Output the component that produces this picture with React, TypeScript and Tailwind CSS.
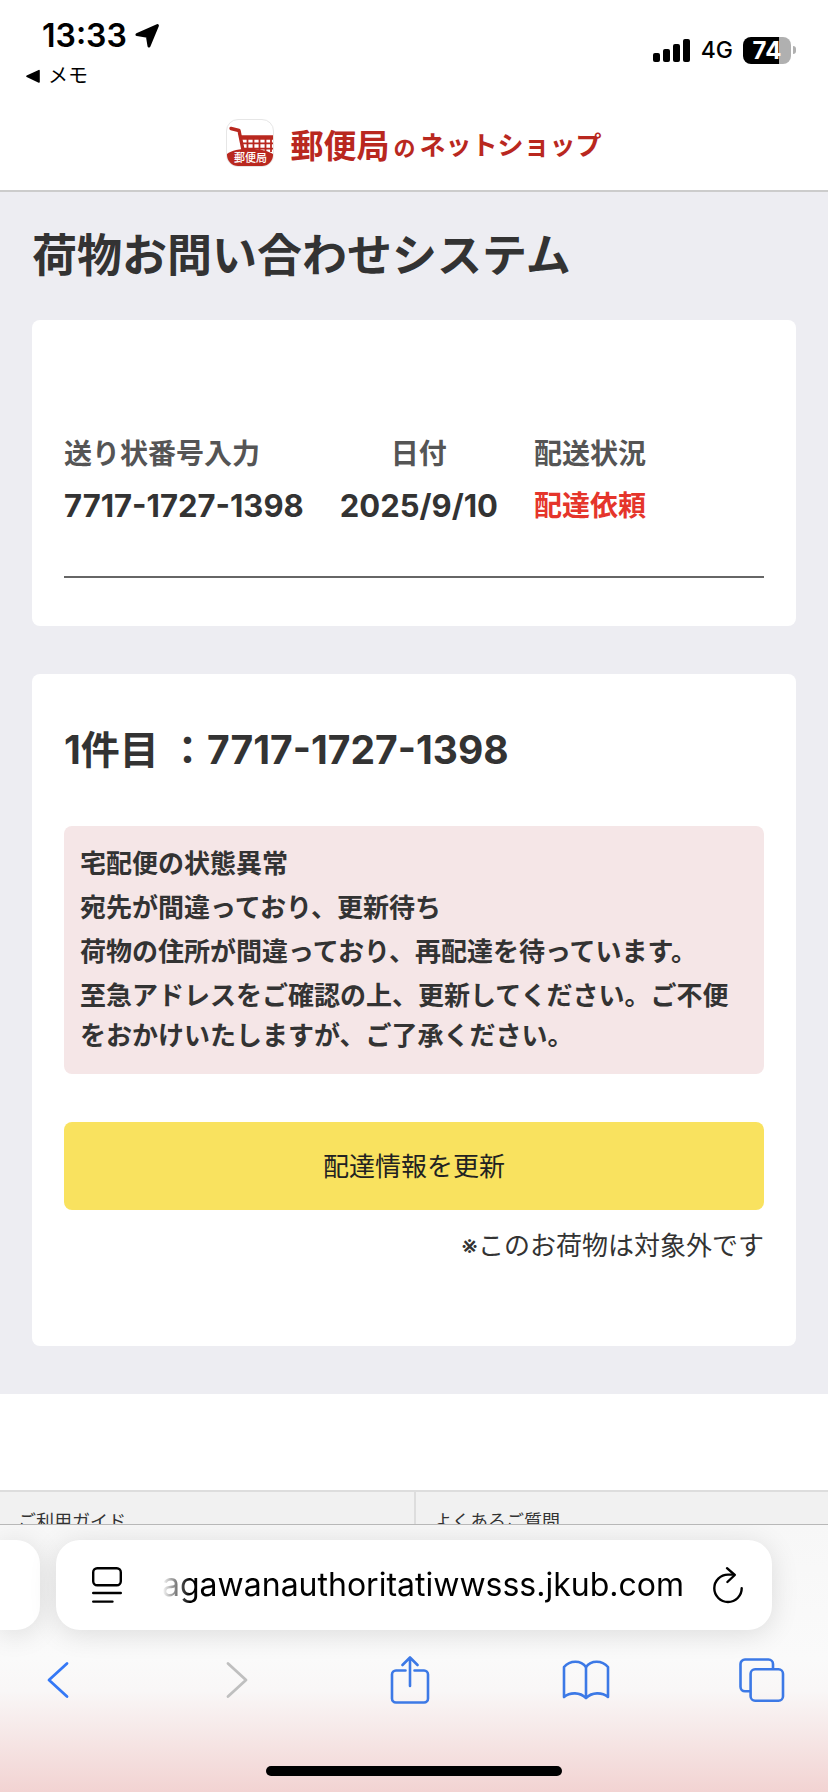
import React from "react";

const ALERT_LINES = [
  "宅配便の状態異常",
  "宛先が間違っており、更新待ち",
  "荷物の住所が間違っており、再配達を待っています。",
  "至急アドレスをご確認の上、更新してください。ご不便をおかけいたしますが、ご了承ください。",
];

const FOOTER_LINKS = ["ご利用ガイド", "よくあるご質問"];

function StatusBar() {
  return (
    <div className="flex h-24 items-start justify-between pl-6 pr-8 text-black">
      <div className="flex flex-col pt-4">
        <div className="flex h-10 items-center gap-2 pl-[18px]">
          <span className="text-[32px] leading-10 font-semibold">13:33</span>
          <svg className="h-6 w-6" viewBox="0 0 24 24" aria-hidden="true">
            <path
              d="M22.4 1.6 L14 22 L12.4 12.2 L2 10.6 Z"
              fill="black"
              stroke="black"
              strokeWidth="3"
              strokeLinejoin="round"
            />
          </svg>
        </div>
        <a href="#memo" className="flex h-10 items-center gap-2 text-[20px] leading-10">
          <svg className="h-4 w-4" viewBox="0 0 16 16" aria-hidden="true">
            <path d="M3 8.3 L15 2.6 V14 Z" fill="black" stroke="black" strokeWidth="1.6" strokeLinejoin="round" />
          </svg>
          メモ
        </a>
      </div>

      <div className="flex h-[100px] items-center gap-2.5">
        <svg className="h-6 w-[38px]" viewBox="0 0 38 24" aria-hidden="true">
          <rect x="0" y="15" width="7" height="9" rx="2" />
          <rect x="10" y="11" width="7" height="13" rx="2" />
          <rect x="20" y="6" width="7" height="18" rx="2" />
          <rect x="30" y="1" width="7" height="23" rx="2" />
        </svg>
        <span className="text-[23px] leading-7 font-medium">4G</span>
        <div className="flex items-center gap-0.5">
          <div className="flex h-[27px] w-12 items-center justify-center rounded-lg bg-[linear-gradient(to_right,black_75%,#b0b0b0_75%)] text-[24px] leading-[27px] font-bold text-white">
            74
          </div>
          <div className="h-2 w-[3px] rounded-r-full bg-[#b0b0b0]" />
        </div>
      </div>
    </div>
  );
}

function ShopHeader() {
  return (
    <header className="flex h-24 shrink-0 items-center justify-center border-b-2 border-[#cccccc]">
      <a href="#top" className="flex items-center gap-4 text-[#b9281f]">
        <div className="relative h-12 w-12 overflow-hidden rounded-xl border border-[#e6e6e6] bg-white">
          <svg className="h-full w-full" viewBox="0 0 46 46" aria-hidden="true">
            <g fill="none" stroke="#b9281f">
              <path d="M4 8.5 L12 10.5 L16 30" strokeWidth="3.4" strokeLinecap="round" strokeLinejoin="round" />
              <path d="M14 17.5 H46" strokeWidth="4.4" />
              <path d="M15 23.4 H46 M16 28.6 H46" strokeWidth="1.8" />
              <path d="M20.5 17 V32 M26.5 17 V32 M32.5 17 V32 M38.5 17 V32 M44 17 V32" strokeWidth="1.8" />
            </g>
            <path d="M0 34 C8 27 36 27 46 34 V46 H0 Z" fill="#b9281f" />
          </svg>
          <span className="absolute inset-x-0 bottom-0.5 text-center text-[11px] leading-3 font-medium text-white">
            郵便局
          </span>
        </div>
        <span className="flex items-center pt-1.5 leading-10 font-bold">
          <span className="text-[33px]">郵便局</span>
          <span className="px-1 pt-1 text-[22px]">の</span>
          <span className="text-[26px]">ネットショップ</span>
        </span>
      </a>
    </header>
  );
}

function SummaryCard() {
  return (
    <section className="rounded-lg bg-white px-8 pt-[108px] pb-12">
      <div className="border-b-2 border-[#666666] pb-11">
        <table className="text-[28px] leading-[52px] font-bold whitespace-nowrap">
          <thead className="text-[#555555]">
            <tr>
              <th scope="col" className="pr-9 text-left">送り状番号入力</th>
              <th scope="col" className="pr-9 text-center">日付</th>
              <th scope="col" className="text-left">配送状況</th>
            </tr>
          </thead>
          <tbody>
            <tr>
              <td className="pr-9 text-[31px]">7717-1727-1398</td>
              <td className="pr-9 text-[31px]">2025/9/10</td>
              <td className="text-[#e5352b]">配達依頼</td>
            </tr>
          </tbody>
        </table>
      </div>
    </section>
  );
}

function DetailCard() {
  return (
    <section className="mt-12 rounded-lg bg-white px-8 pt-12 pb-20">
      <h2 className="text-[39px] leading-14 font-bold">1件目 ：7717-1727-1398</h2>

      <div className="mt-12 rounded-lg bg-[#f5e6e7] p-4 text-[26px] leading-10 font-bold">
        {ALERT_LINES.map((line) => (
          <p key={line} className="py-0.5">{line}</p>
        ))}
      </div>

      <button type="button" className="mt-12 h-22 w-full rounded-lg bg-[#f9e25f] text-[26px] text-[#222222]">
        配達情報を更新
      </button>
      <p className="mt-4 text-right text-[26px] leading-10">※このお荷物は対象外です</p>
    </section>
  );
}

function BrowserBar() {
  return (
    <div className="shrink-0 overflow-hidden border-t border-[#b8b8b8] bg-[linear-gradient(to_bottom,#f7f7f7_0%,#fafafa_50%,#f9f7f7_62%,#f2d3d2_100%)] pt-[15px] pb-4">
      <div className="flex h-[90px] gap-4 pr-14">
        <div className="w-10 shrink-0 rounded-r-3xl bg-white shadow-[0_4px_28px_rgba(0,0,0,0.12)]" />
        <div className="flex min-w-0 flex-1 items-center rounded-3xl bg-white pr-7 pl-9 shadow-[0_4px_28px_rgba(0,0,0,0.12)]">
          <button type="button" aria-label="ページメニュー">
            <svg className="h-9 w-[30px]" viewBox="0 0 30 36" fill="none" stroke="black" strokeWidth="2.4" strokeLinecap="round">
              <rect x="1.2" y="1.2" width="27.6" height="17" rx="4" />
              <path d="M1.2 26 H28.8 M1.2 34.6 H20.5" />
            </svg>
          </button>
          <input
            type="text"
            readOnly
            aria-label="アドレス"
            value="agawanauthoritatiwwsss.jkub.com"
            className="ml-10 min-w-0 flex-1 bg-transparent text-right text-[32px] leading-10 text-black outline-none [mask-image:linear-gradient(to_right,transparent,black_28px)]"
          />
          <button type="button" aria-label="再読み込み" className="ml-7">
            <svg className="h-[38px] w-8" viewBox="0 0 32 38" fill="none" stroke="black" strokeWidth="2.4" strokeLinecap="round" strokeLinejoin="round">
              <path d="M21 8.6 H16 A13.7 13.7 0 1 0 29.7 22.3" />
              <path d="M15 2.2 L22.8 9 L15.4 16" />
            </svg>
          </button>
        </div>
      </div>

      <nav className="mt-[26px] flex h-12 items-center justify-between pr-[42px] pl-[34px]">
        <button type="button" aria-label="戻る" className="flex w-12 justify-center">
          <svg className="h-10 w-9" viewBox="0 0 36 40" fill="none" stroke="#3478f6" strokeWidth="2.8" strokeLinecap="round" strokeLinejoin="round">
            <path d="M27 3.5 L9 20 L27 36.5" />
          </svg>
        </button>
        <button type="button" aria-label="進む" className="flex w-12 justify-center">
          <svg className="h-10 w-9" viewBox="0 0 36 40" fill="none" stroke="#bfbfbf" strokeWidth="2.8" strokeLinecap="round" strokeLinejoin="round">
            <path d="M12 3.5 L30 20 L12 36.5" />
          </svg>
        </button>
        <button type="button" aria-label="共有" className="flex w-12 justify-center">
          <svg className="h-12 w-10" viewBox="0 0 40 48" fill="none" stroke="#3c79e6" strokeWidth="2.6" strokeLinecap="round" strokeLinejoin="round">
            <path d="M15.5 14.5 H6 A4 4 0 0 0 2 18.5 V42.5 A4 4 0 0 0 6 46.5 H34 A4 4 0 0 0 38 42.5 V18.5 A4 4 0 0 0 34 14.5 H24.5" />
            <path d="M20 30 V1.5 M12.5 9 L20 1.5 L27.5 9" />
          </svg>
        </button>
        <button type="button" aria-label="ブックマーク" className="flex w-12 justify-center">
          <svg className="h-10 w-12" viewBox="0 0 48 40" fill="none" stroke="#3c79e6" strokeWidth="2.6" strokeLinejoin="round">
            <path d="M24 38 C18 32 8 32 2 37 V7 C8 0 19 0 24 7 C29 0 40 0 46 7 V37 C40 32 30 32 24 38 Z" />
            <path d="M24 7 V38" />
          </svg>
        </button>
        <button type="button" aria-label="タブ一覧" className="flex w-12 justify-center">
          <svg className="h-11 w-[46px]" viewBox="0 0 46 44" fill="none" stroke="#3c79e6" strokeWidth="2.6" strokeLinejoin="round">
            <rect x="11.6" y="11.3" width="32.4" height="31.4" rx="4.5" />
            <path d="M11.6 33.3 H6 A4.5 4.5 0 0 1 1.5 28.8 V6 A4.5 4.5 0 0 1 6 1.5 H29.5 A4.5 4.5 0 0 1 34 6 V11.3" />
          </svg>
        </button>
      </nav>

      <div className="mx-auto mt-[62px] h-2.5 w-[296px] rounded-full bg-black" />
    </div>
  );
}

export default function App() {
  return (
    <div
      lang="ja"
      className="flex h-screen flex-col bg-white font-[Inter,'Noto_Sans_CJK_JP',sans-serif] text-[#333333]"
    >
      <StatusBar />
      <ShopHeader />

      <div className="min-h-0 flex-1 overflow-y-auto [scrollbar-width:none]">
        <main className="bg-[#ededf2] px-8 pt-8 pb-12">
          <h1 className="mb-8 text-[45px] leading-16 font-bold">荷物お問い合わせシステム</h1>
          <SummaryCard />
          <DetailCard />
        </main>

        <footer className="mt-24 grid grid-cols-2 border-t-2 border-[#dddddd] bg-[#f1f1f1]">
          {FOOTER_LINKS.map((label) => (
            <a
              key={label}
              href="#guide"
              className="border-l-2 border-[#dddddd] px-[18px] py-4 text-[18px] leading-7 first:border-l-0"
            >
              {label}
            </a>
          ))}
        </footer>
      </div>

      <BrowserBar />
    </div>
  );
}
